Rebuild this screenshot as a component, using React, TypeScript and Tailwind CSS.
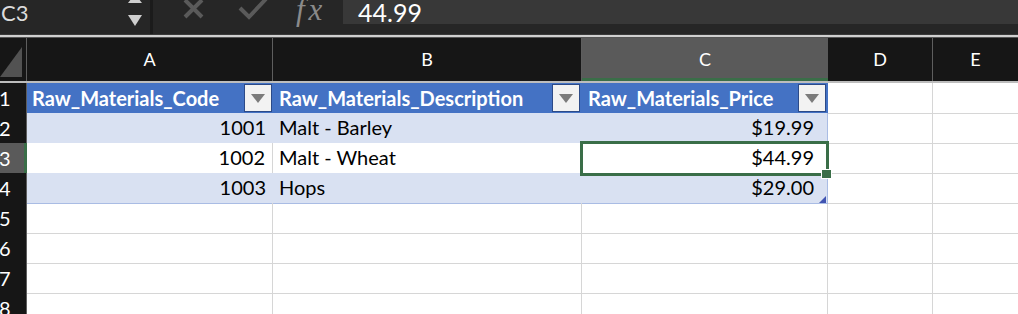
import React from "react";

const F = { fontFamily: 'Lato, "Open Sans", "Liberation Sans", sans-serif' };

function Filter() {
  return (
    <div className="w-[28px] h-[28px] bg-[#f2f2f2] border border-[#2c4a88] flex items-center justify-center shrink-0">
      <svg width="14" height="9" viewBox="0 0 14 9">
        <polygon points="0,0 14,0 7,9" fill="#7b7b7b" />
      </svg>
    </div>
  );
}

const data = [
  { code: "1001", desc: "Malt - Barley", price: "$19.99" },
  { code: "1002", desc: "Malt - Wheat", price: "$44.99" },
  { code: "1003", desc: "Hops", price: "$29.00" },
];

export default function App() {
  return (
    <div className="w-[1018px] h-[314px] overflow-hidden bg-white" style={F}>
      {/* formula bar */}
      <div className="h-[34px] bg-[#262626] flex">
        <div className="w-[150px] relative text-[#dcdcdc] text-[22px] leading-none pl-[1px] pt-[2px]">
          C3
          <svg className="absolute left-[127px] top-[-6px]" width="16" height="34" viewBox="0 0 16 34">
            <polygon points="1,0 15,0 8,9" fill="#cfcfcf" transform="rotate(180 8 4.5)" />
            <polygon points="1,21 15,21 8,32" fill="#cfcfcf" />
          </svg>
        </div>
        <div className="w-[3px] bg-[#1b1b1b]" />
        <div className="w-[190px] relative">
          <svg className="absolute left-[30px] top-[0px]" width="22" height="19" viewBox="0 0 22 19">
            <path d="M2 0 L19 17 M19 0 L2 17" stroke="#5a5a5a" strokeWidth="4" />
          </svg>
          <svg className="absolute left-[85px] top-[-2px]" width="30" height="22" viewBox="0 0 30 22">
            <path d="M2 10 L11 19 L28 1" stroke="#5a5a5a" strokeWidth="4" fill="none" />
          </svg>
          <span
            className="absolute left-[143px] top-[-6px] text-[#8a8a8a] text-[31px] italic leading-none tracking-[4px]"
            style={{ fontFamily: '"Liberation Serif", serif' }}
          >
            fx
          </span>
        </div>
        <div className="flex-1 flex flex-col">
          <div className="h-[27px] bg-[#383838] text-white text-[25px] leading-none pl-[15px] -mt-[3px] pt-[3px]">44.99</div>
        </div>
      </div>
      <div className="h-[1px] bg-[#3a3a3a]" />
      <div className="h-[2px] bg-[#d0d0d0]" />
      <div className="h-[1px] bg-[#555]" />

      {/* column headers */}
      <div className="grid grid-cols-[27px_246px_309px_246px_105px_1fr] h-[45px] bg-[#161616] text-white text-[18px] border-b-[2px] border-[#bdbdbd]">
        <div className="border-r border-[#5e5e5e] relative">
          <svg className="absolute left-0 top-[9px]" width="22" height="30" viewBox="0 0 22 30">
            <polygon points="22,0 22,30 0,30" fill="#525252" />
          </svg>
        </div>
        <div className="border-r border-[#5e5e5e] flex items-center justify-center">A</div>
        <div className="border-r border-[#5e5e5e] flex items-center justify-center">B</div>
        <div className="bg-[#5a5a5a] border-b-[3px] border-[#3a6e48] flex items-center justify-center pt-[3px]">C</div>
        <div className="border-r border-[#5e5e5e] flex items-center justify-center">D</div>
        <div className="flex items-center justify-center">E</div>
      </div>

      {/* row 1: table header */}
      <div className="grid grid-cols-[27px_246px_309px_246px_105px_1fr] h-[30px] text-[20px]">
        <div className="bg-[#161616] text-white border-r border-[#5e5e5e] border-b border-b-[#444] leading-[30px] -ml-[1px]">1</div>
        <div className="bg-[#4472c4] flex items-center justify-between pl-[5px] pr-[1px] text-white font-bold border-b border-[#b4c6e7]">
          <span>Raw_Materials_Code</span>
          <Filter />
        </div>
        <div className="bg-[#4472c4] flex items-center justify-between pl-[6px] pr-[2px] text-white font-bold border-b border-[#b4c6e7]">
          <span>Raw_Materials_Description</span>
          <Filter />
        </div>
        <div className="bg-[#4472c4] flex items-center justify-between pl-[6px] pr-[2px] text-white font-bold border-b border-[#b4c6e7]">
          <span>Raw_Materials_Price</span>
          <Filter />
        </div>
        <div className="border-r border-b border-[#d6d6d6]" />
        <div className="border-b border-[#d6d6d6]" />
      </div>

      {data.map((r, i) => {
        const band = i % 2 === 0;
        const sel = i === 1;
        return (
          <div key={r.code} className="grid grid-cols-[27px_246px_309px_246px_105px_1fr] h-[30px] text-[20px] text-black">
            <div
              className={
                sel
                  ? "bg-[#5a5a5a] text-white border-r-[3px] border-[#3a6e48] border-b border-b-[#444] leading-[30px] -ml-[1px]"
                  : "bg-[#161616] text-white border-r border-[#5e5e5e] border-b border-b-[#444] leading-[30px] -ml-[1px]"
              }
            >
              {i + 2}
            </div>
            <div
              className={
                band
                  ? "bg-[#d9e1f2] border-b border-[#a9bce4] text-right pr-[7px] leading-[29px]"
                  : "bg-white border-r border-[#d6d6d6] border-b border-b-[#a9bce4] text-right pr-[7px] leading-[29px]"
              }
            >
              {r.code}
            </div>
            <div
              className={
                band
                  ? "bg-[#d9e1f2] border-b border-[#a9bce4] pl-[6px] leading-[29px]"
                  : "bg-white border-r border-[#d6d6d6] border-b border-b-[#a9bce4] pl-[6px] leading-[29px]"
              }
            >
              {r.desc}
            </div>
            <div
              className={
                band
                  ? "relative bg-[#d9e1f2] border-b border-[#a9bce4] border-r border-r-[#a9bce4] text-right pr-[13px] leading-[29px]"
                  : "relative bg-white border-b border-[#a9bce4] border-r border-r-[#a9bce4] text-right pr-[13px] leading-[29px]"
              }
            >
              {r.price}
              {sel && (
                <>
                  <div className="absolute z-10 left-[-2px] top-[-2px] right-[-2px] bottom-[-3px] border-[3px] border-[#3a6e48]" />
                  <div className="absolute z-20 right-[-5px] bottom-[-6px] w-[11px] h-[10px] bg-[#3a6e48] border border-white" />
                </>
              )}
              {i === 2 && (
                <svg className="absolute right-[1px] bottom-[0px]" width="7" height="7" viewBox="0 0 7 7">
                  <polygon points="7,0 7,7 0,7" fill="#4054b2" />
                </svg>
              )}
            </div>
            <div className="border-r border-b border-[#d6d6d6]" />
            <div className="border-b border-[#d6d6d6]" />
          </div>
        );
      })}

      {[5, 6, 7, 8].map((n) => (
        <div key={n} className="grid grid-cols-[27px_246px_309px_246px_105px_1fr] h-[30px] text-[20px]">
          <div className="bg-[#161616] text-white border-r border-[#5e5e5e] border-b border-b-[#444] leading-[30px] -ml-[1px]">{n}</div>
          <div className="border-r border-b border-[#d6d6d6]" />
          <div className="border-r border-b border-[#d6d6d6]" />
          <div className="border-r border-b border-[#d6d6d6]" />
          <div className="border-r border-b border-[#d6d6d6]" />
          <div className="border-b border-[#d6d6d6]" />
        </div>
      ))}
    </div>
  );
}
